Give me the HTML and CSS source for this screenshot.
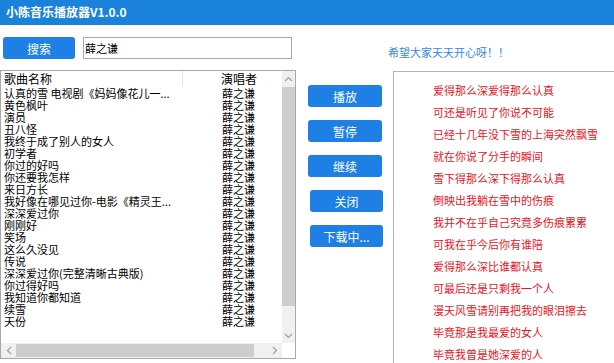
FILE: index.html
```html
<!DOCTYPE html>
<html lang="zh-CN">
<head>
  <meta charset="UTF-8">
  <meta name="viewport" content="width=device-width, initial-scale=1.0">
  <title>小陈音乐播放器V1.0.0</title>
  <link rel="stylesheet" href="styles.css">
</head>

<body>
  <div class="titlebar">小陈音乐播放器V1.0.0</div>

  <div class="toolbar">
    <button class="btn search">搜索</button>
    <input type="text" class="keyword" value="薛之谦">
    <div class="motto">希望大家天天开心呀！！</div>
  </div>

  <div class="main">
    <div class="songlist">
      <div class="songs">
        <div class="row head">
          <span class="name">歌曲名称</span>
          <span class="singer">演唱者</span>
        </div>
        <div class="row"><span class="name">认真的雪 电视剧《妈妈像花儿一...</span><span class="singer">薛之谦</span></div>
        <div class="row"><span class="name">黄色枫叶</span><span class="singer">薛之谦</span></div>
        <div class="row"><span class="name">演员</span><span class="singer">薛之谦</span></div>
        <div class="row"><span class="name">丑八怪</span><span class="singer">薛之谦</span></div>
        <div class="row"><span class="name">我终于成了别人的女人</span><span class="singer">薛之谦</span></div>
        <div class="row"><span class="name">初学者</span><span class="singer">薛之谦</span></div>
        <div class="row"><span class="name">你过的好吗</span><span class="singer">薛之谦</span></div>
        <div class="row"><span class="name">你还要我怎样</span><span class="singer">薛之谦</span></div>
        <div class="row"><span class="name">来日方长</span><span class="singer">薛之谦</span></div>
        <div class="row"><span class="name">我好像在哪见过你-电影《精灵王...</span><span class="singer">薛之谦</span></div>
        <div class="row"><span class="name">深深爱过你</span><span class="singer">薛之谦</span></div>
        <div class="row"><span class="name">刚刚好</span><span class="singer">薛之谦</span></div>
        <div class="row"><span class="name">笑场</span><span class="singer">薛之谦</span></div>
        <div class="row"><span class="name">这么久没见</span><span class="singer">薛之谦</span></div>
        <div class="row"><span class="name">传说</span><span class="singer">薛之谦</span></div>
        <div class="row"><span class="name">深深爱过你(完整清晰古典版)</span><span class="singer">薛之谦</span></div>
        <div class="row"><span class="name">你过得好吗</span><span class="singer">薛之谦</span></div>
        <div class="row"><span class="name">我知道你都知道</span><span class="singer">薛之谦</span></div>
        <div class="row"><span class="name">续雪</span><span class="singer">薛之谦</span></div>
        <div class="row"><span class="name">天份</span><span class="singer">薛之谦</span></div>
      </div>

      <div class="vscroll">
        <div class="arrow">
          <svg width="9" height="6" viewBox="0 0 9 6"><path d="M1 5 L4.5 1.5 L8 5" fill="none" stroke="#a0a0a0" stroke-width="1.2"/></svg>
        </div>
        <div class="vthumb"></div>
        <div class="arrow">
          <svg width="9" height="6" viewBox="0 0 9 6"><path d="M1 1 L4.5 4.5 L8 1" fill="none" stroke="#a0a0a0" stroke-width="1.2"/></svg>
        </div>
      </div>

      <div class="hscroll">
        <div class="arrow">
          <svg width="6" height="9" viewBox="0 0 6 9"><path d="M5 1 L1.5 4.5 L5 8" fill="none" stroke="#a0a0a0" stroke-width="1.2"/></svg>
        </div>
        <div class="hthumb"></div>
        <div class="arrow">
          <svg width="6" height="9" viewBox="0 0 6 9"><path d="M1 1 L4.5 4.5 L1 8" fill="none" stroke="#a0a0a0" stroke-width="1.2"/></svg>
        </div>
      </div>
      <div class="corner"></div>
    </div>

    <div class="controls">
      <button class="btn ctrl">播放</button>
      <button class="btn ctrl">暂停</button>
      <button class="btn ctrl">继续</button>
      <button class="btn ctrl shift">关闭</button>
      <button class="btn ctrl shift">下载中...</button>
    </div>

    <div class="lyrics">
      <p>爱得那么深爱得那么认真</p>
      <p>可还是听见了你说不可能</p>
      <p>已经十几年没下雪的上海突然飘雪</p>
      <p>就在你说了分手的瞬间</p>
      <p>雪下得那么深下得那么认真</p>
      <p>倒映出我躺在雪中的伤痕</p>
      <p>我并不在乎自己究竟多伤痕累累</p>
      <p>可我在乎今后你有谁陪</p>
      <p>爱得那么深比谁都认真</p>
      <p>可最后还是只剩我一个人</p>
      <p>漫天风雪请别再把我的眼泪擦去</p>
      <p>毕竟那是我最爱的女人</p>
      <p>毕竟我曾是她深爱的人</p>
    </div>
  </div>
</body>

</html>
```

FILE: styles.css
```css
body {
  margin: 0;
  width: 614px;
  height: 363px;
  overflow: hidden;
  background-color: #ffffff;
  font-family: "Noto Sans CJK SC", "Noto Sans", sans-serif;
  font-size: 11px;
  color: #000000;
}

.titlebar {
  height: 25px;
  line-height: 24px;
  padding-left: 6px;
  background-color: #1a82da;
  color: #ffffff;
  font-size: 12px;
  font-weight: bold;
}

.toolbar {
  display: flex;
  align-items: flex-start;
  height: 45px;
  padding-left: 3px;
}

.btn {
  border: none;
  border-radius: 3px;
  background-color: #1e80e4;
  color: #ffffff;
  font-family: "Noto Sans CJK SC", "Noto Sans", sans-serif;
  font-size: 12px;
  padding: 0;
  height: 22px;
}

.search {
  width: 72px;
  margin-top: 12px;
}

.keyword {
  box-sizing: border-box;
  width: 209px;
  height: 22px;
  margin: 12px 0 0 8px;
  padding: 0 1px;
  border: 1px solid #a8a8a8;
  font-family: "Noto Sans CJK SC", "Noto Sans", sans-serif;
  font-size: 11px;
  color: #000000;
  outline: none;
}

.motto {
  margin: 21px 0 0 96px;
  line-height: 12px;
  color: #3489e0;
}

.main {
  display: flex;
  align-items: flex-start;
}

/* song list with its scrollbars */
.songlist {
  display: grid;
  grid-template-columns: 281px 13px;
  grid-template-rows: 272px 15px;
  border: 1px solid #a8a8a8;
  background-color: #ffffff;
}

.songs {
  overflow: hidden;
}

.row {
  display: flex;
  height: 12px;
  line-height: 12px;
  white-space: nowrap;
}

.row .name {
  width: 179px;
  padding-left: 3px;
  overflow-x: clip;
  overflow-y: visible;
}

.row .singer {
  padding-left: 39px;
}

.row.head {
  height: 15px;
  line-height: 15px;
  margin-bottom: 1px;
  font-size: 12px;
}

.row.head .name {
  border-right: 1px solid #e5e5e5;
  width: 178px;
}

.row.head .singer {
  padding-left: 38px;
}

.vscroll {
  display: flex;
  flex-direction: column;
  background-color: #f0f0f0;
}

.vscroll .arrow {
  height: 15px;
  display: flex;
  align-items: center;
  justify-content: center;
}

.vthumb {
  height: 219px;
  margin: 1px 0 auto;
  background-color: #cdcdcd;
}

.hscroll {
  display: flex;
  background-color: #f0f0f0;
}

.hscroll .arrow {
  width: 15px;
  display: flex;
  align-items: center;
  justify-content: center;
}

.hthumb {
  width: 238px;
  margin: 1px auto 1px 0;
  background-color: #cdcdcd;
}

.corner {
  background-color: #ffffff;
}

.controls {
  display: flex;
  flex-direction: column;
  gap: 13px;
  padding: 15px 0 0 12px;
}

.ctrl {
  width: 74px;
}

.ctrl.shift {
  width: 73px;
  margin-left: 2px;
}

.lyrics {
  flex: 1;
  height: 300px;
  margin: 1px 0 0 10px;
  padding: 7px 0 0 39px;
  border-left: 1px solid #b4b4b4;
  border-top: 1px solid #b4b4b4;
  color: #e8141e;
}

.lyrics p {
  margin: 0;
  line-height: 22px;
  white-space: nowrap;
}
```
